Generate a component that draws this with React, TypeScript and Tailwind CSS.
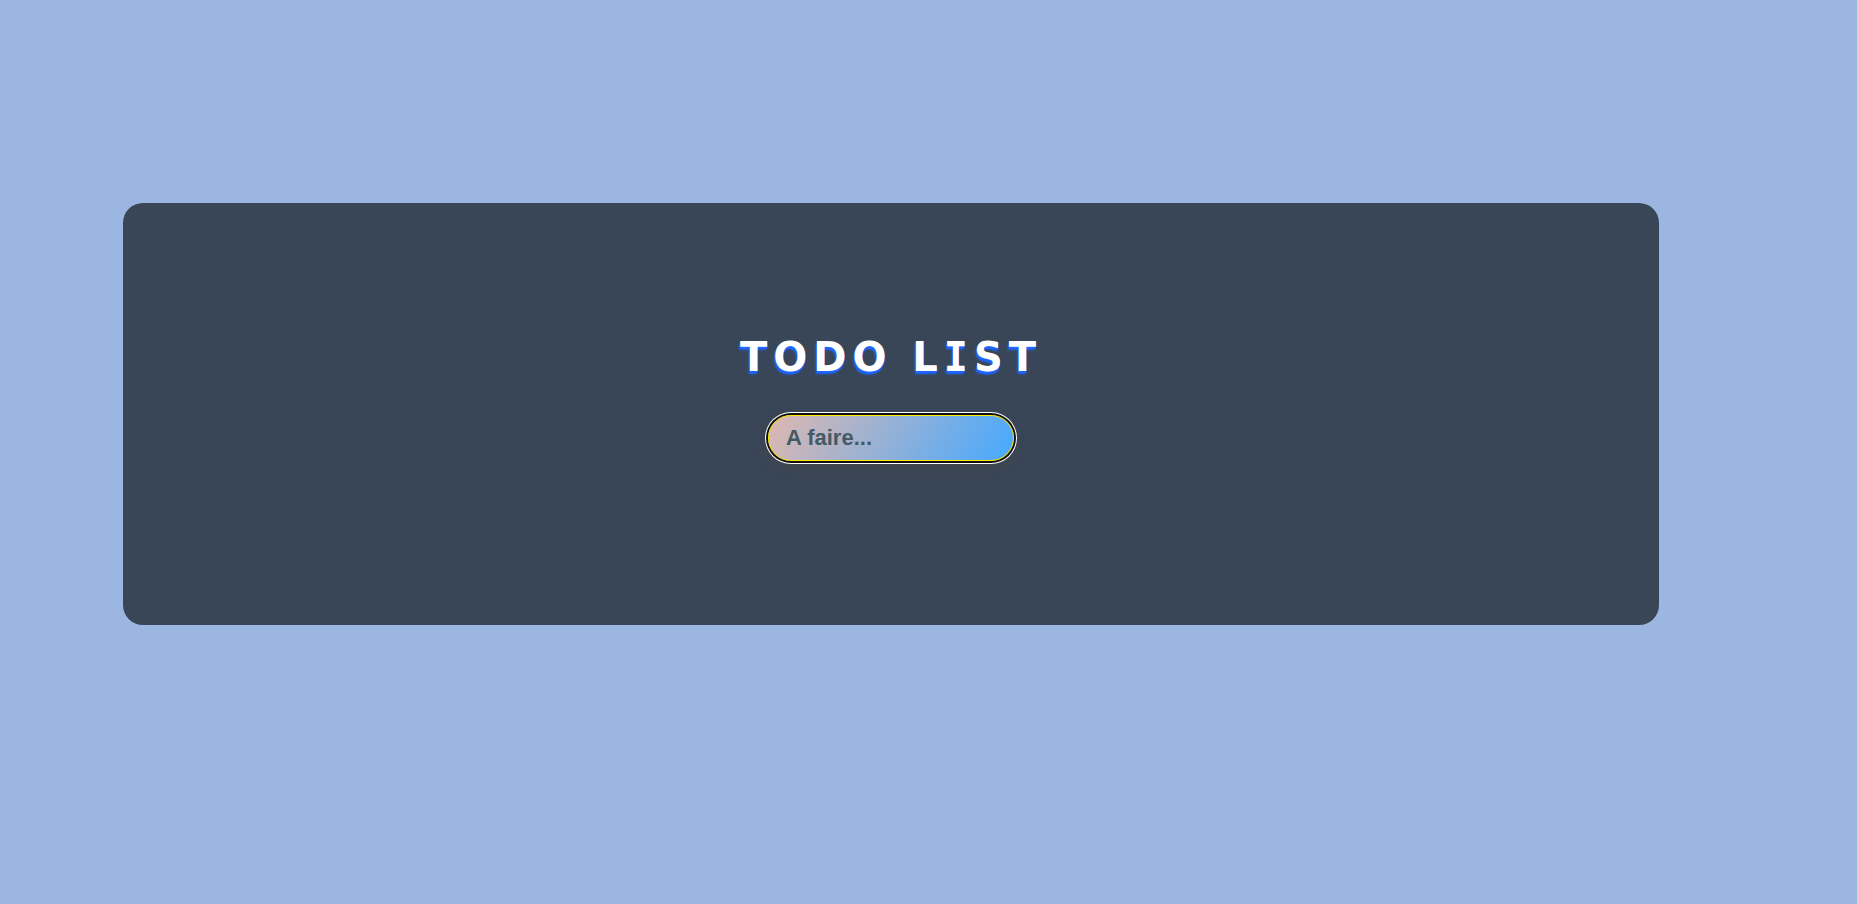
import { useState } from "react";

export default function App() {
  const [task, setTask] = useState("");

  return (
    <main className="min-h-screen bg-[#9bb7e1] pt-[203px] pr-[198px] pl-[123px]">
      <section className="flex flex-col items-center rounded-[20px] bg-[#394658] pt-[130px] pb-[164px]">
        <h1 className="font-['DejaVu_Sans',sans-serif] text-[40px] leading-[48px] font-bold tracking-[6px] text-white [font-kerning:none] [text-shadow:-1px_3px_2px_#1f66ff,0_2px_1px_#1f66ff]">
          TODO L<span className="font-['DejaVu_Sans_Mono',monospace]">I</span>ST
        </h1>
        <form className="mt-[34px] flex" onSubmit={(e) => e.preventDefault()}>
          <input
            type="text"
            aria-label="A faire"
            placeholder="A faire..."
            value={task}
            onChange={(e) => setTask(e.target.value)}
            className="h-[46px] w-[246px] rounded-full border border-[#ffe600] bg-linear-[120deg,#dfb8b0,#45a9ff] bg-origin-border px-[17px] font-['Liberation_Sans',sans-serif] text-[22px] font-bold text-[#455a64] shadow-[0_0_0_2px_#101010,0_0_0_3px_#ffffff,0_5px_15px_#444444] outline-none placeholder:text-[#455a64]"
          />
        </form>
      </section>
    </main>
  );
}
